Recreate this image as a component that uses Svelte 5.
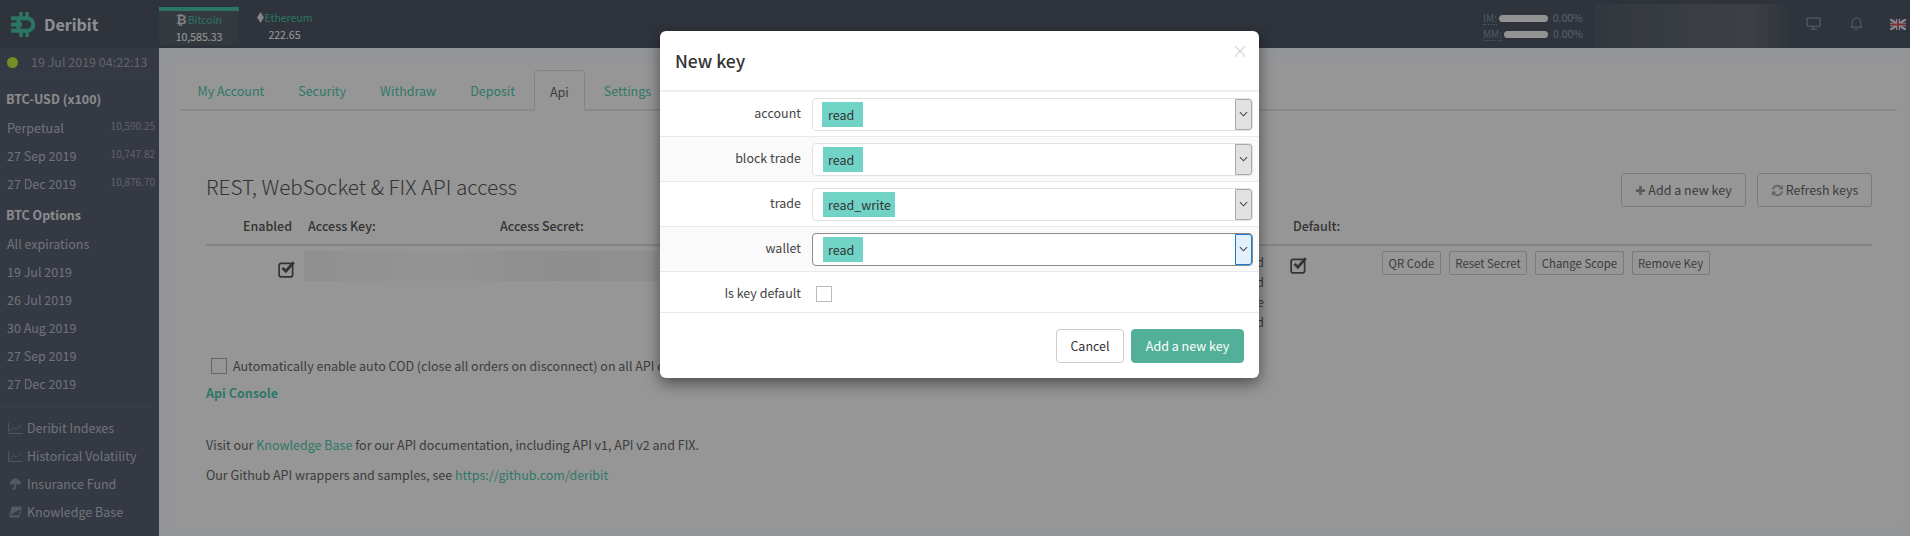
<script>
  const contracts = [["Perpetual","10,590.25"],["27 Sep 2019","10,747.82"],["27 Dec 2019","10,876.70"]];
  const options = ["All expirations","19 Jul 2019","26 Jul 2019","30 Aug 2019","27 Sep 2019","27 Dec 2019"];
  const tabs = ["My Account","Security","Withdraw","Deposit","Api","Settings"];
  const rows = [["account","read"],["block trade","read"],["trade","read_write"],["wallet","read"]];
</script>

<div class="page">
  <header class="top">
    <div class="brand">
      <svg class="logo" viewBox="0 0 26 25" width="26" height="25"><path d="M10 0v5M16 0v5M10 20v5M16 20v5" fill="none" stroke="#48c4a6" stroke-width="3.500"/><path d="M0 6.200h16a6.300 6.300 0 0 1 0 12.600H0M0 12.500h11M7.500 6v13" fill="none" stroke="#48c4a6" stroke-width="4"/></svg>
      <span>Deribit</span>
    </div>
    <div class="coin active"><div class="cname"><b class="sym">₿</b>Bitcoin</div><div class="cval">10,585.33</div></div>
    <div class="coin eth"><div class="cname"><svg viewBox="0 0 10 16" width="7" height="11"><path d="M5 0l5 8-5 8-5-8z" fill="#ddd"/></svg>Ethereum</div><div class="cval">222.65</div></div>
    <div class="spacer"></div>
    <div class="margins">
      <div class="mrow"><span class="ml">IM:</span><i class="bar"></i><span class="pct">0.00%</span></div>
      <div class="mrow"><span class="ml">MM:</span><i class="bar"></i><span class="pct">0.00%</span></div>
    </div>
    <div class="blurhead"></div>
    <svg class="ic1" viewBox="0 0 16 14" width="15" height="13"><path d="M1 1h14v9H1zM8 10v3M4.500 13h7" fill="none" stroke="#93b0c6" stroke-width="1"/></svg>
    <svg class="ic2" viewBox="0 0 14 16" width="13" height="15"><path d="M1 12c2-2 1-4 2-7 1-4 7-4 8 0 1 3 0 5 2 7zM5 13.500c1 2 3 2 4 0" fill="none" stroke="#93b0c6" stroke-width="1"/></svg>
    <svg class="flag" viewBox="0 0 16 11" width="16" height="11"><rect width="16" height="11" fill="#5a5f9a"/><path d="M0 0l16 11M16 0L0 11" stroke="#eee" stroke-width="2"/><path d="M8 0v11M0 5.500h16" stroke="#eee" stroke-width="3.600"/><path d="M8 0v11M0 5.500h16" stroke="#c8505a" stroke-width="1.800"/></svg>
  </header>

  <div class="body">
    <aside class="side">
      <div class="status"><i class="dot"></i><span>19 Jul 2019 04:22:13</span></div>
      <div class="group">BTC-USD (x100)</div>
      {#each contracts as c}
        <div class="item"><span>{c[0]}</span><small>{c[1]}</small></div>
      {/each}
      <div class="group second">BTC Options</div>
      {#each options as o}
        <div class="item"><span>{o}</span></div>
      {/each}
      <div class="links">
        <div class="item lk"><svg viewBox="0 0 16 12" width="15" height="11"><path d="M.5 0v11.500H16M2 9l4-4 3 2 5-5" fill="none" stroke="#8f95a6"/></svg><span>Deribit Indexes</span></div>
        <div class="item lk"><svg viewBox="0 0 16 12" width="15" height="11"><path d="M.5 0v11.500H16M2 9l4-4 3 2 5-5" fill="none" stroke="#8f95a6"/></svg><span>Historical Volatility</span></div>
        <div class="item lk"><svg viewBox="0 0 16 14" width="15" height="12"><path d="M2 7a6 6 0 0 1 12 0zM8 7v5a1.500 1.500 0 0 1-3 0" fill="#8f95a6" stroke="#8f95a6"/></svg><span>Insurance Fund</span></div>
        <div class="item lk"><svg viewBox="0 0 16 14" width="15" height="12"><path d="M4 1h11l-3 10H1zM1 11v2h11l3-10" fill="#8f95a6" stroke="#8f95a6" stroke-width=".6"/></svg><span>Knowledge Base</span></div>
      </div>
    </aside>

    <main class="main">
      <section class="card">
        <nav class="tabs">
          {#each tabs as t}<span class="tab" class:on={t === "Api"}>{t}</span>{/each}
        </nav>
        <div class="content">
          <div class="headline">
            <h2>REST, WebSocket &amp; FIX API access</h2>
            <div class="actions">
              <button class="btn add"><svg viewBox="0 0 12 12" width="11" height="11"><path d="M6 1v10M1 6h10" stroke="#999" stroke-width="3"/></svg>Add a new key</button>
              <button class="btn refresh"><svg viewBox="0 0 14 14" width="13" height="13"><path d="M2 6a5 5 0 0 1 9-2M12 8a5 5 0 0 1-9 2" fill="none" stroke="#aaa" stroke-width="2"/><path d="M13 1v5H8zM1 13V8h5z" fill="#aaa"/></svg>Refresh keys</button>
            </div>
          </div>
          <div class="thead">
            <span></span><b>Enabled</b><b>Access Key:</b><b>Access Secret:</b><b>Default:</b>
          </div>
          <div class="trow">
            <svg class="chk first" viewBox="0 0 16 16" width="18" height="18"><rect x="1" y="3" width="12" height="12" rx="2" fill="none" stroke="#555" stroke-width="1.500"/><path d="M4 7l3 3 7-8" fill="none" stroke="#555" stroke-width="2.500"/></svg>
            <div class="smudge"></div>
            <div class="peek"><span>read</span><span>read</span><span>write</span><span>read</span></div>
            <svg class="chk second" viewBox="0 0 16 16" width="18" height="18"><rect x="1" y="3" width="12" height="12" rx="2" fill="none" stroke="#555" stroke-width="1.500"/><path d="M4 7l3 3 7-8" fill="none" stroke="#555" stroke-width="2.500"/></svg>
            <div class="mini">
              <button>QR Code</button><button>Reset Secret</button><button>Change Scope</button><button>Remove Key</button>
            </div>
          </div>
          <label class="cod"><i class="box"></i>Automatically enable auto COD (close all orders on disconnect) on all API connections</label>
          <div class="console">Api Console</div>
          <p class="p1">Visit our <a href="#k">Knowledge Base</a> for our API documentation, including API v1, API v2 and FIX.</p>
          <p class="p2">Our Github API wrappers and samples, see <a href="#g">https://github.com/deribit</a></p>
        </div>
      </section>
    </main>
  </div>

  <div class="backdrop"></div>
  <div class="modal">
    <div class="mhead"><h3>New key</h3><span class="close">×</span></div>
    {#each rows as r, i}
      <div class="frow" class:alt={i % 2 === 1}>
        <span class="flabel">{r[0]}</span>
        <div class="select" class:focus={r[0] === "wallet"}>
          <span class="tag" class:first={i === 0}>{r[1]}</span>
          <span class="arrow"><svg viewBox="0 0 10 6" width="9" height="6"><path d="M1 1l4 4 4-4" fill="none" stroke="#444" stroke-width="1.200"/></svg></span>
        </div>
      </div>
    {/each}
    <div class="frow last">
      <span class="flabel">Is key default</span>
      <i class="mbox"></i>
    </div>
    <div class="mfoot">
      <button class="cancel">Cancel</button>
      <button class="ok">Add a new key</button>
    </div>
  </div>
</div>

<style>
  :global(body) { margin: 0; }
  .page {
    width: 1910px; height: 536px; overflow: hidden; position: relative;
    background: #f5f8fd; color: #666;
    font: 12.5px/20px "Noto Sans CJK SC", "Noto Sans", sans-serif;
  }
  .top { height: 48px; display: flex; background: #4f5663; box-sizing: border-box; }
  .brand { width: 159px; flex: none; display: flex; align-items: center; gap: 7px; padding-left: 11px; box-sizing: border-box; color: #eceff2; font-size: 16px; font-weight: 700; }
  .coin { height: 38px; margin-top: 7px; box-sizing: border-box; color: #fff; text-align: center; width: 80px; flex: none; }
  .coin.active { background: #585f6c; border-top: 4px solid #48c4a6; }
  .coin.eth { width: 75px; margin-top: 9px; padding-left: 16px; }
  .cname { color: #48c4a6; font-size: 10.5px; line-height: 17px; display: flex; justify-content: center; align-items: center; gap: 1px; }
  .sym { color: #d8d8d8; font: 700 13px/17px "DejaVu Sans", sans-serif; }
  .cval { font-size: 10.5px; line-height: 17px; }
  .spacer { flex: 1; }
  .margins { width: 100px; flex: none; padding-top: 10px; font-size: 10px; margin-right: 12px; margin-left: -1px; box-sizing: border-box; }
  .mrow { display: flex; align-items: center; height: 16px; gap: 2px; justify-content: flex-end; }
  .ml { font-size: 10px; color: #7f97a8; border-bottom: 1px dotted #7f97a8; line-height: 13px; }
  .bar { width: 50px; height: 7px; background: #f4f4f4; border-radius: 4px; }
  .pct { color: #8fa8bb; margin-left: 3px; width: 31px; font-size: 10.5px; }
  .blurhead { width: 195px; flex: none; margin: 4px 0 0 0; background: linear-gradient(90deg, #555c68, #606772 50%, #656b74 80%, #505764); }
  .ic1 { margin: 17px 0 0 16px; flex: none; }
  .ic2 { margin: 16px 0 0 29px; flex: none; }
  .flag { margin: 19px 4px 0 27px; flex: none; }

  .body { display: flex; height: 488px; }
  .side { width: 159px; flex: none; background: #585f70; color: #bcc0c9; box-sizing: border-box; }
  .status { height: 28px; display: flex; align-items: center; gap: 13px; padding-left: 7px; border-bottom: 1px solid #5f6677; color: #a5a8ae; }
  .dot { width: 11px; height: 11px; border-radius: 50%; background: #c4eb3c; flex: none; }
  .group { font-weight: 700; line-height: 29px; padding-left: 6px; color: #e8e8ec; margin-top: 7px; }
  .group.second { margin-top: 3px; }
  .item { height: 28px; box-sizing: border-box; padding: 2px 4px 0 7px; display: flex; align-items: center; justify-content: space-between; }
  .item small { font-size: 10px; color: #a0a4ae; margin-top: -4px; }
  .links { margin-top: 10px; border-top: 1px solid #5f6677; padding-top: 5px; }
  .item.lk { justify-content: flex-start; gap: 4px; padding-left: 8px; }

  .main { flex: 1; padding: 14px 6px 9px 15px; min-width: 0; }
  .card { height: 100%; background: #fbfbfb; border-radius: 4px; box-sizing: border-box; padding: 8px 7px; }
  .tabs { display: flex; height: 41px; border-bottom: 2px solid #e4e4e4; box-sizing: border-box; padding-left: 1.500px; }
  .tab { padding: 11px 15px 0; margin-right: 4px; color: #4fc9ac; height: 41px; box-sizing: border-box; }
  .tab.on { border: 1px solid #ddd; border-bottom: 2px solid #fbfbfb; color: #666; border-radius: 4px 4px 0 0; }
  .content { padding: 0 25px; }
  .headline { display: flex; justify-content: space-between; height: 96px; padding-top: 59px; box-sizing: border-box; }
  h2 { margin: 0; font-size: 20.7px; font-weight: 300; line-height: 32px; color: #555; }
  .actions { display: flex; gap: 11px; margin-top: 3px; }
  button { font: inherit; white-space: nowrap; }
  .btn { height: 34px; background: #fbfbfb; border: 1px solid #ccc; border-radius: 3px; color: #666; display: flex; align-items: center; justify-content: center; gap: 2px; padding: 0; }
  .add { width: 125px; } .refresh { width: 115px; }
  .thead { height: 39px; border-bottom: 2px solid #ddd; box-sizing: border-box; display: grid; grid-template-columns: 37px 65px 192px 793px auto; align-items: center; white-space: nowrap; }
  .thead b { font-weight: 500; color: #555; }
  .trow { height: 110px; display: flex; align-items: flex-start; }
  .chk.first { margin: 14px 0 0 72px; flex: none; }
  .smudge { width: 354px; height: 30px; margin: 5px 0 0 8px; background: linear-gradient(90deg, #f0f0f0, #f7f7f7 40%, #ededed 70%, #efefef); flex: none; }
  .peek { width: 606px; flex: none; padding-top: 6px; text-align: right; display: flex; flex-direction: column; }
  .peek span { height: 20px; }
  .chk.second { margin: 10px 0 0 26px; flex: none; }
  .mini { display: flex; gap: 8px; margin: 5px 0 0 74px; }
  .mini button { height: 24px; padding: 0 5.500px; background: #fbfbfb; border: 1px solid #ccc; border-radius: 2px; color: #666; font-size: 11.4px; line-height: 20px; }
  .cod { display: flex; align-items: center; gap: 6px; padding-left: 5px; height: 20px; white-space: nowrap; }
  .box { width: 14px; height: 14px; border: 1px solid #aaa; background: #fbfbfb; flex: none; }
  .console { font-weight: 700; color: #4fc9ac; margin-top: 7px; }
  p { margin: 0; }
  .p1 { margin-top: 32px; } .p2 { margin-top: 10px; }
  a { color: #4fc9ac; text-decoration: none; }

  .backdrop { position: absolute; inset: 0; background: rgba(0,0,0,.4); }
  .modal {
    position: absolute; left: 660px; top: 31px; width: 599px; background: #fff; border-radius: 6px;
    box-shadow: 0 5px 15px rgba(0,0,0,.5); color: #444; height: 347px;
  }
  .mhead { height: 59px; border-bottom: 2px solid #eee; display: flex; justify-content: space-between; }
  h3 { margin: 18px 0 0 15px; font-size: 17.5px; line-height: 24px; font-weight: 500; color: #333; }
  .close { font-size: 18px; color: #d8d8d8; margin: 7px 10px 0 0; line-height: 24px; }
  .frow { height: 45px; border-bottom: 1px solid #e9e9e9; display: flex; align-items: center; box-sizing: border-box; }
  .frow.alt { background: #fafafa; }
  .frow.last { height: 41px; padding-top: 3px; }
  .flabel { width: 141px; text-align: right; flex: none; padding-bottom: 2px; }
  .select { margin-left: 11px; width: 441px; height: 33px; border: 1px solid #e2e2e2; border-radius: 4px; box-sizing: border-box; display: flex; justify-content: space-between; align-items: center; background: #fff; padding-left: 10px; }
  .select.focus { border-color: #8a8a8a; }
  .tag { background: #70d3c6; height: 25px; line-height: 25px; padding: 0 4px 0 5px; min-width: 31px; color: #333; }
  .tag.first { margin-left: -1px; padding-left: 6px; }
  .arrow { width: 17px; height: 31px; background: #e2e2e2; border: 1px solid #aaa; box-sizing: border-box; border-radius: 0 3px 3px 0; display: flex; align-items: center; justify-content: center; }
  .focus .arrow { background: #e3f0fb; border-color: #1a78d8; }
  .mbox { width: 14px; height: 14px; border: 1px solid #bbb; margin-left: 15px; }
  .mfoot { display: flex; justify-content: flex-end; gap: 7px; padding: 16px 15px 0 0; }
  .cancel { width: 68px; height: 34px; background: #fff; border: 1px solid #ccc; border-radius: 4px; color: #333; }
  .ok { width: 113px; height: 34px; background: #52b098; border: 1px solid #52b098; border-radius: 4px; color: #fff; }
</style>
